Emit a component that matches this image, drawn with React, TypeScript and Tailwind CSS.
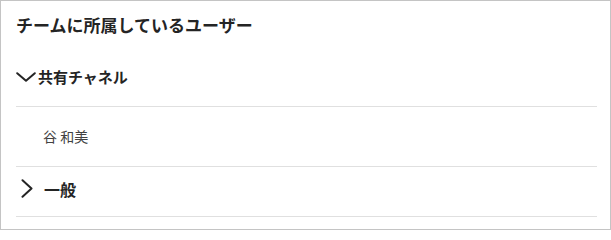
import React from 'react';

const font = { fontFamily: '"Noto Sans CJK JP", "Noto Sans", sans-serif' };

function ChevronDown() {
  return (
    <svg width="20" height="10" viewBox="0 0 20 10" fill="none" className="shrink-0">
      <path d="M1.2 1.2 L10 8.8 L18.8 1.2" stroke="#242424" strokeWidth="2" strokeLinecap="round" strokeLinejoin="round" />
    </svg>
  );
}

function ChevronRight() {
  return (
    <svg width="12" height="19" viewBox="0 0 12 19" fill="none" className="shrink-0">
      <path d="M1.5 1.2 L10.5 9.5 L1.5 17.8" stroke="#242424" strokeWidth="2" strokeLinecap="round" strokeLinejoin="round" />
    </svg>
  );
}

export default function App() {
  return (
    <div
      className="w-[611px] h-[230px] bg-white border border-[#c4c4c4] pl-[15px] pr-[13px] text-[#242424] overflow-hidden"
      style={font}
    >
      <div className="h-[47px] flex items-center text-[17px] font-bold">チームに所属しているユーザー</div>

      {/* 共有チャネル */}
      <div className="h-[59px] flex items-center gap-[2px] text-[15px] font-bold border-b border-[#e0e0e0]">
        <ChevronDown />
        <span>共有チャネル</span>
      </div>
      <div className="h-[60px] flex items-center pl-[27px] text-[14px] text-[#424242] border-b border-[#e0e0e0]">
        谷 和美
      </div>

      {/* 一般 */}
      <div className="h-[50px] pb-[6px] flex items-center text-[16px] font-bold border-b border-[#e0e0e0]">
        <div className="w-[28px] flex pl-[5px]">
          <ChevronRight />
        </div>
        <span>一般</span>
      </div>
    </div>
  );
}
